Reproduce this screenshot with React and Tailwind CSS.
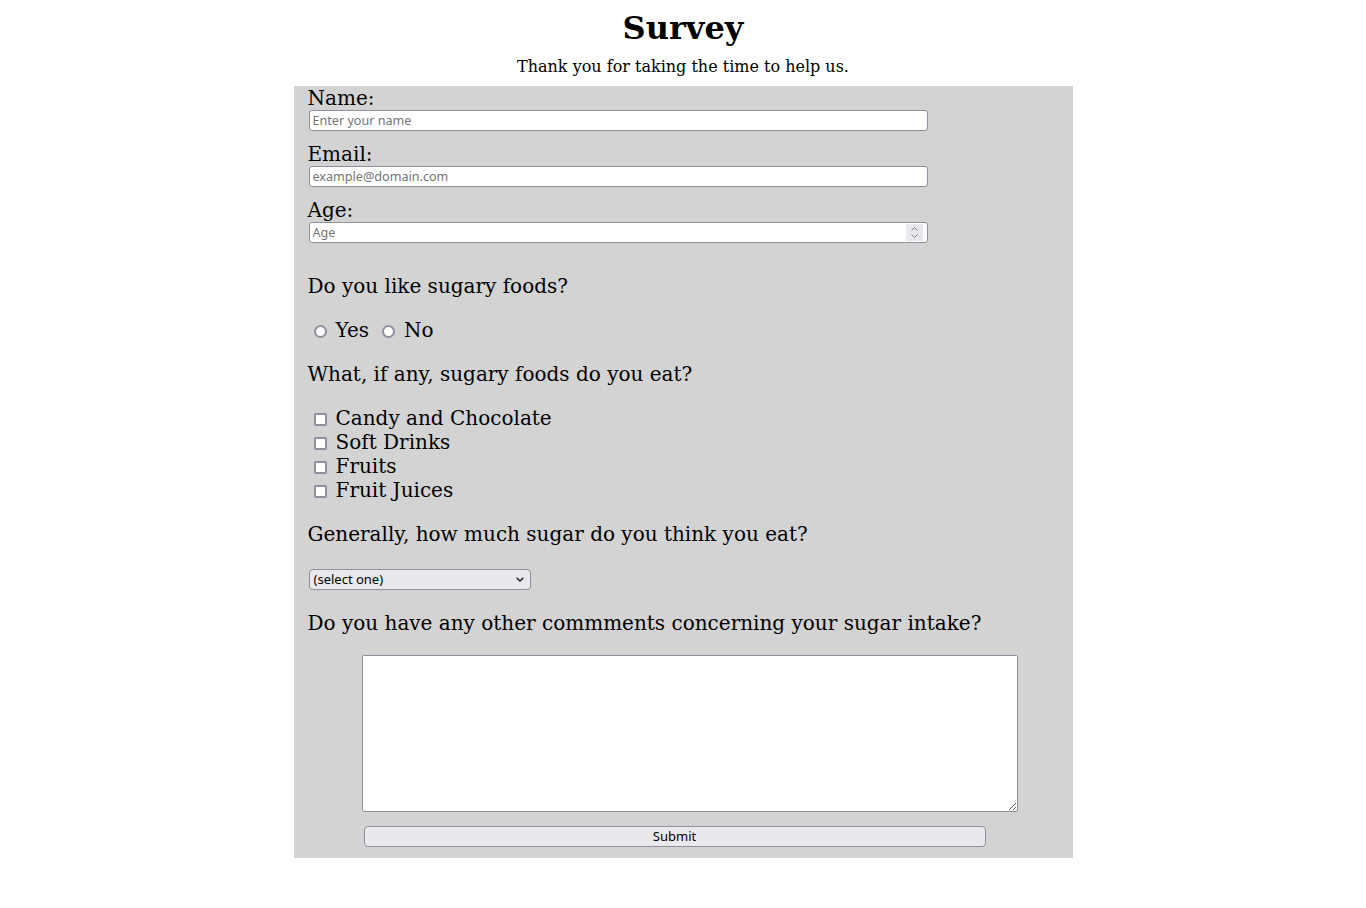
import React from 'react';

const serif = { fontFamily: '"DejaVu Serif", serif' };

const Label = ({ children }) => (
    <div className="h-[24px] leading-[24px] text-[20px] text-black">{children}</div>
);

const TextBox = ({ placeholder }) => (
    <input type="text" placeholder={placeholder} className="block w-[619px] h-[21px] bg-white border border-[#8f8f9d] rounded-[3px] px-[3px] text-[12.6px] text-black placeholder:text-[#757575] outline-none font-['Noto_Sans',sans-serif]" />
);

const Radio = ({ label, name }) => (
    <label className="flex items-center mr-[7px]">
        <input type="radio" name={name} className="appearance-none w-[13px] h-[13px] ml-[6px] mr-[9px] mt-[3px] rounded-full border-2 border-[#8f8f9d] bg-white" />
        <span>{label}</span>
    </label>
);

const Check = ({ label }) => (
    <label className="flex items-center h-[24px] leading-[24px]">
        <input type="checkbox" className="appearance-none w-[13px] h-[13px] ml-[6px] mr-[9px] mt-[3px] rounded-[2px] border-2 border-[#8f8f9d] bg-white" />
        <span>{label}</span>
    </label>
);

export default function App() {
    return (
        <div className="bg-white min-h-[908px] text-black" style={serif}>
            <h1 className="pt-[10px] h-[47px] leading-[37px] text-center text-[32px] font-bold">Survey</h1>
            <p className="mt-[10px] h-[19px] leading-[19px] text-center text-[16px]">Thank you for taking the time to help us.</p>
            <form className="mt-[10px] mx-auto w-[779px] bg-[#d3d3d3] pl-[14px] pb-[11px] text-[20px]">
                <Label>Name:</Label>
                <div className="pl-[1px]"><TextBox placeholder="Enter your name" /></div>
                <div className="mt-[11px]"><Label>Email:</Label></div>
                <div className="pl-[1px]"><TextBox placeholder="example@domain.com" /></div>
                <div className="mt-[11px]"><Label>Age:</Label></div>
                <div className="pl-[1px]">
                    <div className="relative w-[619px]">
                        <TextBox placeholder="Age" />
                        <div className="absolute right-[5px] top-[2px] w-[17px] h-[17px] bg-[#e9e9ed] flex items-center justify-center">
                            <svg width="9" height="13" viewBox="0 0 9 13" fill="none" stroke="#7a7a85" strokeWidth="1">
                                <path d="M1.5 4.5 L4.5 1.5 L7.5 4.5" />
                                <path d="M1.5 8.5 L4.5 11.5 L7.5 8.5" />
                            </svg>
                        </div>
                    </div>
                </div>

                <p className="mt-[31px] h-[24px] leading-[24px]">Do you like sugary foods?</p>
                <div className="mt-[20px] h-[24px] leading-[24px] flex items-center">
                    <Radio name="sugar" label="Yes" />
                    <Radio name="sugar" label="No" />
                </div>

                <p className="mt-[20px] h-[24px] leading-[24px]">What, if any, sugary foods do you eat?</p>
                <div className="mt-[20px]">
                    <Check label="Candy and Chocolate" />
                    <Check label="Soft Drinks" />
                    <Check label="Fruits" />
                    <Check label="Fruit Juices" />
                </div>

                <p className="mt-[20px] h-[24px] leading-[24px]">Generally, how much sugar do you think you eat?</p>
                <div className="mt-[23px] pl-[1px]">
                    <div className="relative w-[222px]">
                        <select className="appearance-none block w-[222px] h-[21px] bg-[#e9e9ed] border border-[#8f8f9d] rounded-[4px] pl-[4px] text-[13px] leading-[19px] text-black outline-none font-['Noto_Sans',sans-serif]">
                            <option>(select one)</option>
                            <option>A little</option>
                            <option>Some</option>
                            <option>A lot</option>
                        </select>
                        <svg className="absolute right-[7px] top-[8px]" width="8" height="5" viewBox="0 0 8 5" fill="none" stroke="#111" strokeWidth="1.3">
                            <path d="M0.7 0.7 L4 4 L7.3 0.7" />
                        </svg>
                    </div>
                </div>

                <p className="mt-[21px] h-[24px] leading-[24px]">Do you have any other commments concerning your sugar intake?</p>
                <div className="mt-[20px] pl-[54px]">
                    <textarea className="block w-[656px] h-[157px] bg-white border border-[#8f8f9d] rounded-[2px] outline-none" />
                </div>
                <div className="mt-[14px] pl-[56px]">
                    <button type="button" className="block w-[622px] h-[21px] bg-[#e9e9ed] border border-[#8f8f9d] rounded-[4px] text-[13px] leading-[19px] text-black font-['Noto_Sans',sans-serif]">Submit</button>
                </div>
            </form>
        </div>
    );
}
